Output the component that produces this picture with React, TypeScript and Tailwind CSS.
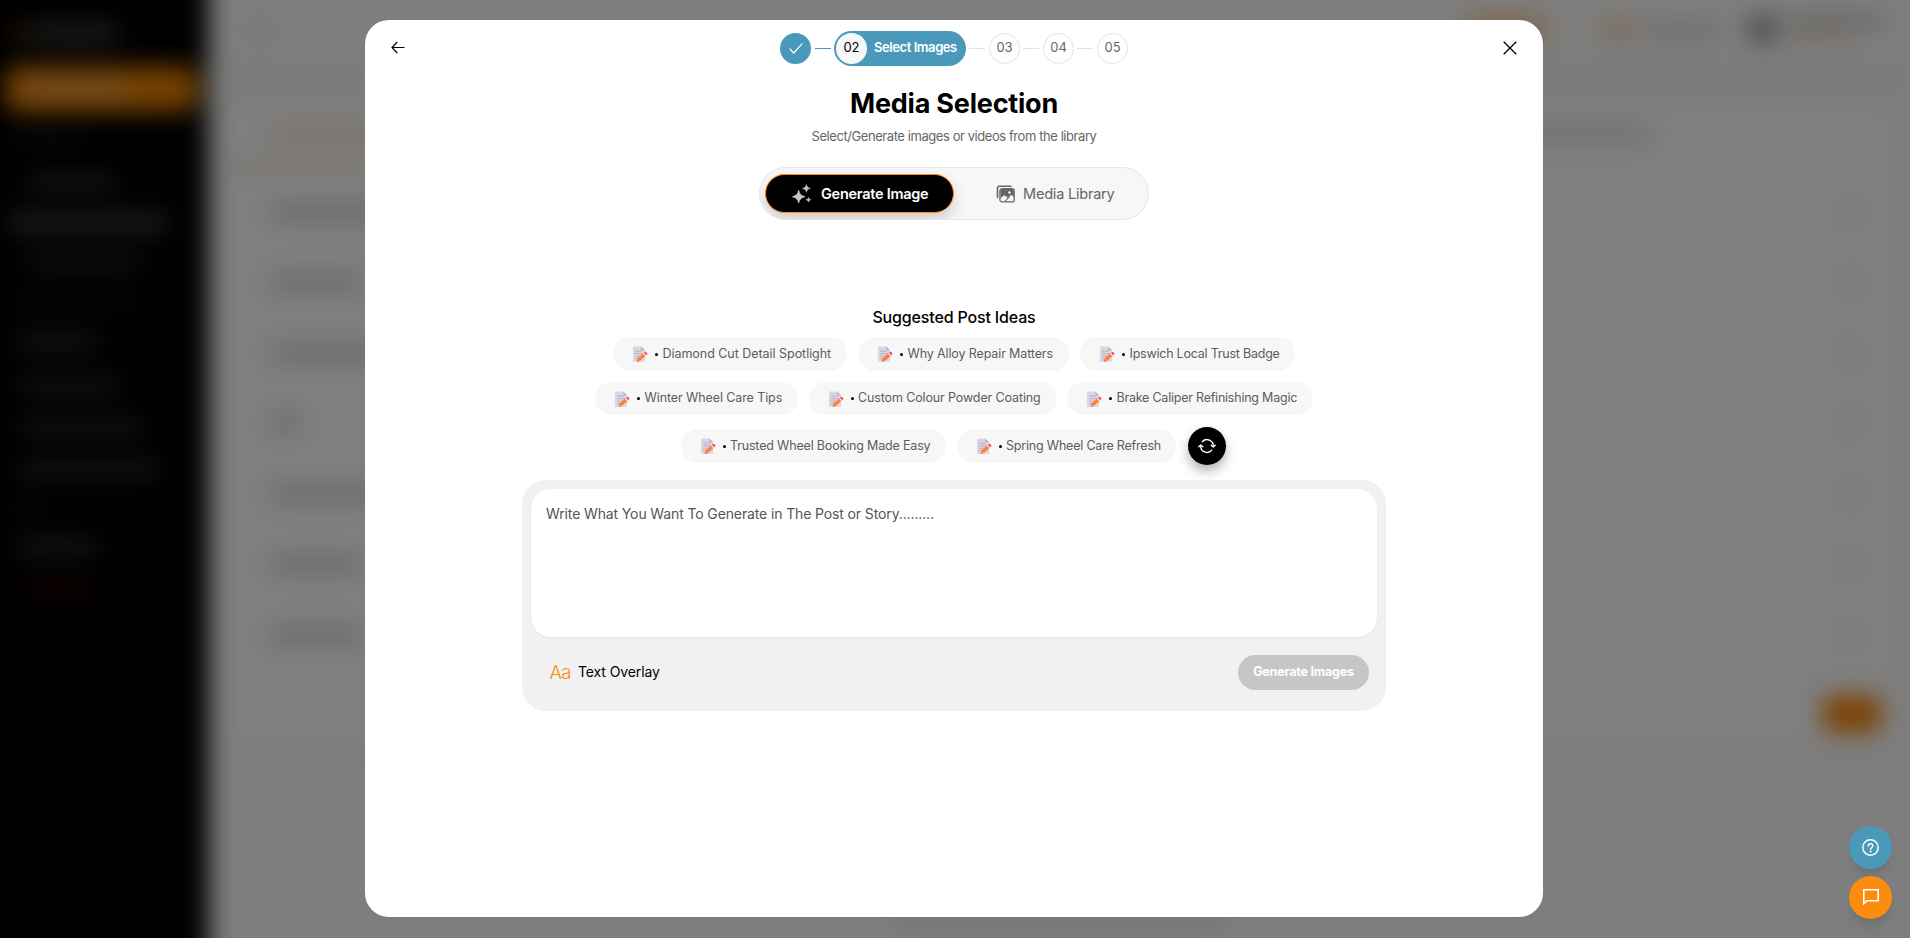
import { useState } from 'react';

type Idea = {
  /** The chip's caption. */
  title: string;
  /** Width class of the chip. */
  width: string;
  /** Letter spacing class of the caption. */
  tracking: string;
};

const ideaRows: Idea[][] = [
  [
    { title: 'Diamond Cut Detail Spotlight', width: 'w-[234px]', tracking: 'tracking-[-0.003em]' },
    { title: 'Why Alloy Repair Matters', width: 'w-[211px]', tracking: 'tracking-[-0.01em]' },
    { title: 'Ipswich Local Trust Badge', width: 'w-[215px]', tracking: 'tracking-[-0.018em]' },
  ],
  [
    { title: 'Winter Wheel Care Tips', width: 'w-[203px]', tracking: 'tracking-[-0.008em]' },
    { title: 'Custom Colour Powder Coating', width: 'w-[248px]', tracking: 'tracking-[-0.01em]' },
    { title: 'Brake Caliper Refinishing Magic', width: 'w-[246px]', tracking: 'tracking-[-0.018em]' },
  ],
  [
    { title: 'Trusted Wheel Booking Made Easy', width: 'w-[265px]', tracking: 'tracking-[-0.014em]' },
    { title: 'Spring Wheel Care Refresh', width: 'w-[219px]', tracking: 'tracking-[-0.016em]' },
  ],
];

/** Sidebar entries: row height, left margin and the bar itself. */
const navRows = [
  { row: 'h-[48px]', bar: 'w-[70px] h-2 ml-3 bg-[#222]' },
  { row: 'h-[44px]', bar: 'w-[88px] h-3 ml-7 bg-[#3a3a3a]' },
  { row: 'h-[38px]', bar: 'w-[160px] h-6 ml-2 bg-[#303030]' },
  { row: 'h-[42px]', bar: 'w-[112px] h-3 ml-7 bg-[#303030]' },
  { row: 'h-[36px]', bar: 'w-[130px] h-2 ml-3 bg-[#1c1c1c]' },
  { row: 'h-[44px]', bar: 'w-[82px] h-3 ml-4 bg-[#3a3a3a]' },
  { row: 'h-[42px]', bar: 'w-[100px] h-3 ml-5 bg-[#363636]' },
  { row: 'h-[42px]', bar: 'w-[124px] h-3 ml-5 bg-[#363636]' },
  { row: 'h-[42px]', bar: 'w-[140px] h-3 ml-5 bg-[#3a3a3a]' },
  { row: 'h-[36px]', bar: 'w-[36px] h-2 ml-3 bg-[#222]' },
  { row: 'h-[42px]', bar: 'w-[82px] h-3 ml-4 bg-[#3c3c3c]' },
  { row: 'h-[42px]', bar: 'w-[64px] h-3 ml-7 bg-[#3a0505]' },
];

const listRows = [
  'w-[190px]',
  'w-[92px]',
  'w-[180px]',
  'w-[30px]',
  'w-[110px]',
  'w-[92px]',
  'w-[92px]',
];

/** The blurred dashboard behind the dialog; it bleeds 40px past the viewport on every side. */
function Dashboard() {
  return (
    <div className="absolute -inset-10 flex bg-[#fdfdfd] blur-[12px]">
      <aside className="w-[248px] shrink-0 bg-black pl-10 pt-10 shadow-[2px_0_10px_rgba(0,0,0,0.25)]">
        <div className="flex h-[66px] items-center gap-1 pl-3">
          <div className="h-5 w-4 bg-[#4a2c10]" />
          <div className="h-5 w-[86px] bg-[#3a3a3a]" />
        </div>
        <div className="ml-1 mr-2.5 flex h-[46px] items-center rounded-2xl bg-[#e88000] pl-5">
          <div className="h-3 w-[106px] bg-[#e8a868]" />
        </div>
        {navRows.map((item, i) => (
          <div key={i} className={`flex items-center ${item.row}`}>
            <div className={item.bar} />
          </div>
        ))}
      </aside>
      <div className="flex flex-1 flex-col pb-10 pr-10 pt-10">
        <header className="flex h-[58px] shrink-0 items-center pl-[42px]">
          <div className="h-5 w-5 rounded-full bg-[#d4dce6]" />
          <div className="ml-auto mr-[26px] flex items-center">
            <div className="h-9 w-[92px] rounded-full bg-[#fbd9b4]" />
            <div className="ml-[50px] h-3 w-[36px] bg-[#f7c08a]" />
            <div className="ml-2 h-3 w-[76px] bg-[#cfcfcf]" />
            <div className="ml-[26px] h-8 w-8 rounded-full bg-[#a0a0a0]" />
            <div className="ml-2 flex flex-col gap-2">
              <div className="h-3 w-[98px] bg-[#c4c4c4]" />
              <div className="h-2 w-[66px] bg-[#f3cfae]" />
            </div>
          </div>
        </header>
        <div className="h-[42px] shrink-0 bg-[#f7f7f7]" />
        <section className="mx-[24px] mt-[8px] h-[650px] shrink-0 rounded-xl border-b-8 border-[#f0f0f0] bg-white">
          <div className="flex h-[54px] items-center justify-between pl-[36px] pr-[236px]">
            <div className="h-6 w-[120px] bg-[#f8ebdd]" />
            <div className="h-3 w-[150px] bg-[#d2d2d2]" />
          </div>
          <div className="h-2 w-[200px] bg-[#f5e2cd]" />
          <div className="h-[7px]" />
          {listRows.map((width, i) => (
            <div
              key={i}
              className="flex h-[70.5px] items-center justify-between border-b border-[#f0f0f0] pl-[38px] pr-[30px]"
            >
              <div className={`h-3.5 bg-[#cacaca] ${width}`} />
              <div className="h-3 w-3 bg-[#dedede]" />
            </div>
          ))}
          <div className="flex justify-end pr-1 pt-[24px]">
            <div className="h-[38px] w-[60px] rounded-xl bg-[#f8860a]" />
          </div>
        </section>
        <div className="mb-[12px] ml-[688px] mt-auto h-2.5 w-[330px] bg-[#d8d8d8]" />
      </div>
    </div>
  );
}

function NoteIcon() {
  return (
    <svg className="h-4 w-[15px] shrink-0" viewBox="0 0 15 16">
      <path d="M0 .5h8.2L12 4.3v11.5H0z" fill="#dcd5e5" />
      <path d="M8.2.5 12 4.3H8.2z" fill="#b9aec7" />
      <path
        d="M2 5.2h7M2 7.7h8M2 10.2h6M2 12.7h3"
        stroke="#b3a5c0"
        strokeWidth=".8"
      />
      <path d="m4.6 12.2 5.6-5 2.4 2.8-5.7 4.9-3 .9z" fill="#ff8238" />
      <path d="m10 7.5 1.2-1 2.3 2.7-1.2 1.1z" fill="#fbe3ea" />
      <path d="m11 6.8 1-.8c.5-.4.9-.3 1.3.2l.9 1.1c.4.5.3.9-.2 1.3l-.9.7z" fill="#f8455f" />
      <path d="m4.1 14.7-.5 1.2 1.2-.3z" fill="#6b4b48" />
    </svg>
  );
}

function SparkleIcon() {
  return (
    <svg className="h-5 w-5" viewBox="0 0 20 20" fill="#c4c4c4">
      <path
        d="M6.7 6.3c.9 3.9 2.2 5.2 6.2 6.4-4 1.1-5.3 2.5-6.2 6.3-.9-3.8-2.2-5.2-6.2-6.3 4-1.2 5.3-2.5 6.2-6.4Z"
        stroke="#c4c4c4"
        strokeWidth=".8"
        strokeLinejoin="round"
      />
      <path d="M14.4.3c.5 2.5 1.3 3.4 4 4.1-2.7.7-3.5 1.5-4 4-.6-2.500-1.400-3.300-4-4 2.600-.7 3.400-1.600 4-4.100Z" stroke="#c4c4c4" strokeWidth=".4" />
      <path d="M16.500 13.200c.4 1.600.9 2.100 2.600 2.500-1.700.5-2.200 1-2.600 2.600-.4-1.600-.9-2.100-2.600-2.600 1.700-.4 2.200-.9 2.600-2.500Z" stroke="#c4c4c4" strokeWidth=".4" />
    </svg>
  );
}

function LibraryIcon() {
  return (
    <svg className="h-[18px] w-[19px]" viewBox="0 0 19 18" fill="none">
      <path d="M1.5 12.5V3.200C1.500 2 2.200 1.300 3.400 1.300H15" stroke="#666" strokeWidth="1.6" strokeLinecap="round" />
      <rect x="3.9" y="3.7" width="14.3" height="13.2" rx="2.2" fill="#f7f7f7" stroke="#666" strokeWidth="1.3" />
      <path d="M4.5 6a2 2 0 0 1 2-2h9.300a2 2 0 0 1 2 2v6l-1.300-1.300c-.9-.9-2.100-.9-2.900 0l-1.900 2.100-2-1.800c-.8-.7-1.800-.7-2.600 0l-2.600 2.600z" fill="#666" />
      <path d="m9 16.3 4.8-5.2" stroke="#666" strokeWidth="1.1" />
      <circle cx="13.4" cy="7.5" r="1.3" fill="#f7f7f7" />
    </svg>
  );
}

function RefreshIcon() {
  return (
    <svg
      className="h-[18px] w-[18px]"
      viewBox="0 0 18 18"
      fill="none"
      stroke="#fff"
      strokeWidth="1.3"
      strokeLinecap="round"
      strokeLinejoin="round"
    >
      <path d="M4.3 4.7A6.300 6.300 0 0 1 15.300 9.300M13.700 13.300A6.300 6.300 0 0 1 2.700 8.700" />
      <path d="M13.2 8.2l2.100 1.900 1.900-1.900M.8 9.800l1.900-1.900 2.100 1.900" />
    </svg>
  );
}

function Stepper() {
  return (
    <div className="flex items-center">
      <div className="flex h-[31px] w-[31px] items-center justify-center rounded-full bg-[#4a99bb]">
        <svg className="h-[11px] w-[14px]" viewBox="0 0 14 11" fill="none">
          <path d="m1 6 3.7 4L13 .8" stroke="#fff" strokeWidth="1.2" strokeLinecap="round" />
        </svg>
      </div>
      <div className="ml-1 mr-[3px] h-px w-4 bg-[#4a99bb]" />
      <div className="flex h-[35px] w-[132px] items-center rounded-full bg-[#4a99bb] pl-0.5">
        <div className="flex h-[31px] w-[31px] shrink-0 items-center justify-center rounded-full bg-[#f7f7f7] pb-px text-[13px] text-black">
          02
        </div>
        <span className="ml-[7px] whitespace-nowrap text-[13px] font-semibold tracking-[-0.033em] text-white">
          Select Images
        </span>
      </div>
      {['03', '04', '05'].map((step) => (
        <div key={step} className="flex items-center">
          <div className="ml-[3px] mr-1 h-px w-4 bg-[#e2e2e2]" />
          <div className="flex h-[31px] w-[31px] items-center justify-center rounded-full border border-[#e4e4e4] pb-px text-[13px] text-[#666]">
            {step}
          </div>
        </div>
      ))}
    </div>
  );
}

function IdeaChip({ idea, height }: { idea: Idea; height: string }) {
  return (
    <button
      className={`flex items-center rounded-full bg-[#f7f7f7] pl-5 ${height} ${idea.width}`}
    >
      <NoteIcon />
      <span className="ml-[7px] h-[3px] w-[3px] shrink-0 rounded-full bg-black" />
      <span
        className={`ml-[4.5px] whitespace-nowrap text-[12.5px] text-[#5c5c5c] ${idea.tracking}`}
      >
        {idea.title}
      </span>
    </button>
  );
}

export default function App() {
  const [prompt, setPrompt] = useState('');

  return (
    <div className="relative h-screen w-screen overflow-hidden font-['Inter',sans-serif]">
      <Dashboard />
      <div className="absolute inset-0 flex justify-center bg-black/50 pr-0.5 pt-5">
        <div className="flex h-[897px] w-[1178px] flex-col items-center rounded-[24px] bg-white">
          <div className="flex h-[56px] w-full items-center justify-between px-[26px]">
            <svg className="mb-px h-[13px] w-[14px]" viewBox="0 0 14 13" fill="none" stroke="#000" strokeWidth="1.2">
              <path d="M1 6.5h12.5M6.2 1 1 6.5 6.2 12" />
            </svg>
            <Stepper />
            <svg className="h-[14px] w-[14px]" viewBox="0 0 14 14" fill="none" stroke="#000" strokeWidth="1.3">
              <path d="m.7.7 12.6 12.6M13.3.7.7 13.3" />
            </svg>
          </div>

          <h1 className="mt-2.5 whitespace-nowrap text-[27px] font-bold leading-9 tracking-[-0.008em] text-black">
            Media Selection
          </h1>
          <p className="mt-1 whitespace-nowrap text-[13px] leading-5 tracking-[-0.033em] text-[#666]">
            Select/Generate images or videos from the library
          </p>

          <div className="mt-[21px] flex h-[53px] w-[390px] items-center overflow-hidden rounded-full border border-[#e6e6e6] bg-[#f7f7f7] pl-[5px]">
            <button className="flex h-[39px] w-[189px] items-center rounded-full border border-[#fb8c0d] bg-black pl-[26px] shadow-[0_8px_16px_rgba(0,0,0,0.16)]">
              <SparkleIcon />
              <span className="ml-[9px] whitespace-nowrap text-[14.5px] font-semibold tracking-[-0.018em] text-white">
                Generate Image
              </span>
            </button>
            <button className="ml-[42px] flex items-center">
              <LibraryIcon />
              <span className="ml-2 whitespace-nowrap text-[14.5px] tracking-[-0.014em] text-[#666]">
                Media Library
              </span>
            </button>
          </div>

          <h2 className="mt-[85px] whitespace-nowrap text-base font-medium leading-6 tracking-[-0.01em] text-black">
            Suggested Post Ideas
          </h2>

          <div className="mt-2 flex flex-col items-center">
            <div className="flex gap-[11px]">
              {ideaRows[0].map((idea) => (
                <IdeaChip key={idea.title} idea={idea} height="h-[34px]" />
              ))}
            </div>
            <div className="mt-[11px] flex gap-[10.5px]">
              {ideaRows[1].map((idea) => (
                <IdeaChip key={idea.title} idea={idea} height="h-[33px]" />
              ))}
            </div>
            <div className="mr-0.5 mt-3 flex items-center gap-[11px]">
              {ideaRows[2].map((idea) => (
                <IdeaChip key={idea.title} idea={idea} height="h-[34px]" />
              ))}
              <button className="ml-px flex h-[38px] w-[38px] items-center justify-center rounded-full bg-black shadow-[0_6px_12px_rgba(0,0,0,0.3)]">
                <RefreshIcon />
              </button>
            </div>
          </div>

          <div className="mt-[15px] h-[231px] w-[864px] rounded-[24px] bg-[#f1f1f1] p-[9px]">
            <textarea
              value={prompt}
              onChange={(e) => setPrompt(e.target.value)}
              placeholder="Write What You Want To Generate in The Post or Story........."
              className="block h-[148px] w-full resize-none rounded-[20px] bg-white px-[15px] py-[15px] text-[14px] leading-5 tracking-[-0.009em] shadow-xs outline-none placeholder:text-[#555]"
            />
            <div className="mt-[18px] flex h-[35px] items-center justify-between pl-[18px] pr-2">
              <button className="flex items-center">
                <span className="w-[22px] text-[18.5px] font-light leading-none tracking-[-0.05em] text-[#fb8c0d]">
                  Aa
                </span>
                <span className="ml-[7px] whitespace-nowrap pb-0.5 text-[14px] tracking-[-0.008em] text-black">
                  Text Overlay
                </span>
              </button>
              <button className="flex h-[35px] w-[131px] items-center justify-center whitespace-nowrap rounded-full bg-[#c6c6c6] text-[12.5px] font-bold tracking-[-0.016em] text-white">
                Generate Images
              </button>
            </div>
          </div>
        </div>
      </div>

      {/* floating help and chat buttons */}
      <div className="absolute bottom-[19px] right-[18px] flex flex-col gap-[7px]">
        <button className="flex h-[43px] w-[43px] items-center justify-center rounded-full bg-[#4a99bb] shadow-lg">
          <svg className="h-[17px] w-[17px]" viewBox="0 0 17 17" fill="none" stroke="#fff" strokeWidth="1.4">
            <circle cx="8.5" cy="8.5" r="7.7" />
            <path d="M6.2 7c0-1.500 1-2.300 2.300-2.300s2.300.8 2.300 2.100c0 1.600-2.200 1.700-2.200 3.500" strokeLinecap="round" />
            <circle cx="8.6" cy="12.5" r=".4" />
          </svg>
        </button>
        <button className="flex h-[43px] w-[43px] items-center justify-center rounded-full bg-[#fb8c0d] shadow-lg">
          {/* square-cornered speech bubble */}
          <svg className="mb-px h-4 w-4" viewBox="0 0 16 16" fill="none" stroke="#fff" strokeWidth="1.6">
            <path d="M.8.8h14.4v11H4L.8 14.600z" />
          </svg>
        </button>
      </div>
    </div>
  );
}
